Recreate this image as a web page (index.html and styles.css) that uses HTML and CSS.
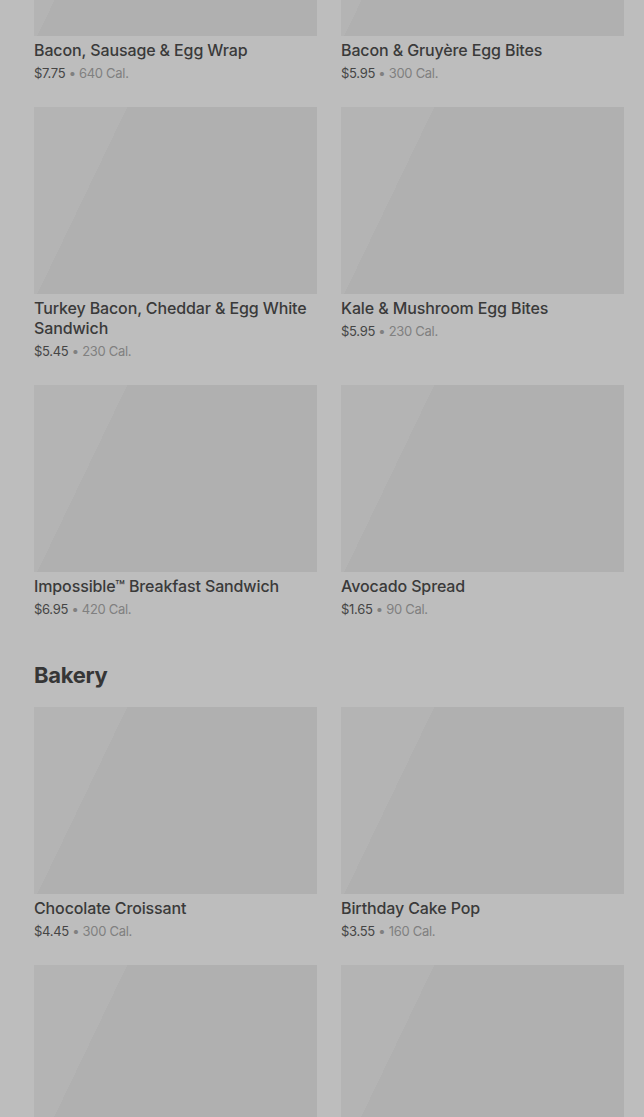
FILE: index.html
```html
<!DOCTYPE html>
<html lang="en">
<head>
  <meta charset="UTF-8">
  <meta name="viewport" content="width=device-width, initial-scale=1.0">
  <title>Menu</title>
  <link rel="stylesheet" href="styles.css">
</head>
<body>
  <main class="menu">
    <section class="section">
      <div class="grid">
        <div class="item">
          <div class="thumb"></div>
          <div class="name">Bacon, Sausage &amp; Egg Wrap</div>
          <div class="meta"><span class="price">$7.75</span> • 640 Cal.</div>
        </div>
        <div class="item">
          <div class="thumb"></div>
          <div class="name">Bacon &amp; Gruyère Egg Bites</div>
          <div class="meta"><span class="price">$5.95</span> • 300 Cal.</div>
        </div>
        <div class="item">
          <div class="thumb"></div>
          <div class="name">Turkey Bacon, Cheddar &amp; Egg White Sandwich</div>
          <div class="meta"><span class="price">$5.45</span> • 230 Cal.</div>
        </div>
        <div class="item">
          <div class="thumb"></div>
          <div class="name">Kale &amp; Mushroom Egg Bites</div>
          <div class="meta"><span class="price">$5.95</span> • 230 Cal.</div>
        </div>
        <div class="item">
          <div class="thumb"></div>
          <div class="name">Impossible™ Breakfast Sandwich</div>
          <div class="meta"><span class="price">$6.95</span> • 420 Cal.</div>
        </div>
        <div class="item">
          <div class="thumb"></div>
          <div class="name">Avocado Spread</div>
          <div class="meta"><span class="price">$1.65</span> • 90 Cal.</div>
        </div>
      </div>
    </section>

    <section class="section">
      <h2 class="section-title">Bakery</h2>
      <div class="grid">
        <div class="item">
          <div class="thumb"></div>
          <div class="name">Chocolate Croissant</div>
          <div class="meta"><span class="price">$4.45</span> • 300 Cal.</div>
        </div>
        <div class="item">
          <div class="thumb"></div>
          <div class="name">Birthday Cake Pop</div>
          <div class="meta"><span class="price">$3.55</span> • 160 Cal.</div>
        </div>
        <div class="item">
          <div class="thumb"></div>
        </div>
        <div class="item">
          <div class="thumb"></div>
        </div>
      </div>
    </section>
  </main>
</body>
</html>
```

FILE: styles.css
```css
body {
  margin: 0;
  background-color: #bdbdbd;
  font-family: Inter, "Noto Sans", Arial, sans-serif;
  color: #3a3a3a;
  overflow: hidden;
}
.menu {
  /* page is scrolled part way into the breakfast list */
  margin-top: -151px;
  padding: 0 20px 0 34px;
}
.section + .section {
  margin-top: 43px;
}
.section-title {
  margin: 0 0 18px;
  font-size: 22px;
  line-height: 28px;
  font-weight: 700;
  letter-spacing: -0.3px;
  color: #363636;
}
.grid {
  display: grid;
  grid-template-columns: 283px 283px;
  column-gap: 24px;
  row-gap: 25px;
}
.thumb {
  height: 187px;
  background: linear-gradient(115.7deg, #b4b4b4 0%, #b4b4b4 25%, #b0b0b0 25%, #b0b0b0 100%);
}
.name {
  margin-top: 4px;
  font-size: 16px;
  line-height: 20px;
  font-weight: 500;
  letter-spacing: -0.12px;
  color: #3a3a3a;
}
.meta {
  margin-top: 4px;
  font-size: 13px;
  line-height: 18px;
  letter-spacing: -0.3px;
  color: #808080;
}
.price {
  color: #454545;
}
```
